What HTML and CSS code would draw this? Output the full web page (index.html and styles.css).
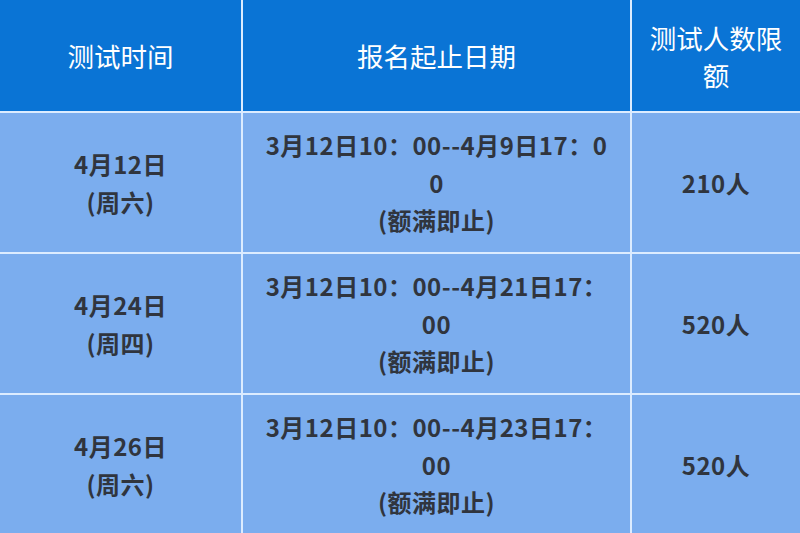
FILE: index.html
```html
<!DOCTYPE html>
<html lang="zh-CN">
<head>
<meta charset="utf-8">
<link rel="stylesheet" href="styles.css">
</head>
<body>
<div class="table">
  <div class="cell head">测试时间</div>
  <div class="cell head">报名起止日期</div>
  <div class="cell head">测试人数限<br>额</div>

  <div class="cell">4月12日<br>(周六)</div>
  <div class="cell">3月12日10：00--4月9日17：0<br>0<br>(额满即止)</div>
  <div class="cell">210人</div>

  <div class="cell">4月24日<br>(周四)</div>
  <div class="cell">3月12日10：00--4月21日17：<br>00<br>(额满即止)</div>
  <div class="cell">520人</div>

  <div class="cell">4月26日<br>(周六)</div>
  <div class="cell">3月12日10：00--4月23日17：<br>00<br>(额满即止)</div>
  <div class="cell">520人</div>
</div>
</body>
</html>
```

FILE: styles.css
```css
html, body {
  margin: 0;
  padding: 0;
  width: 800px;
  height: 533px;
  overflow: hidden;
  background: #dcecff;
}
.table {
  display: grid;
  grid-template-columns: 241px 387px 1fr;
  grid-template-rows: 111px 139px 139px 139px;
  gap: 2px;
  background: #dcecff;
  font-family: "Noto Sans CJK SC", "Noto Sans", sans-serif;
}
.cell {
  display: flex;
  align-items: center;
  justify-content: center;
  text-align: center;
  background: #7badee;
  color: #30353e;
  font-weight: 700;
  font-size: 24px;
  letter-spacing: 0.5px;
  line-height: 37.5px;
}
.cell.head {
  background: #0a74d5;
  color: #ffffff;
  font-weight: 400;
  font-size: 26.5px;
  letter-spacing: 0;
  line-height: 37px;
}
```
